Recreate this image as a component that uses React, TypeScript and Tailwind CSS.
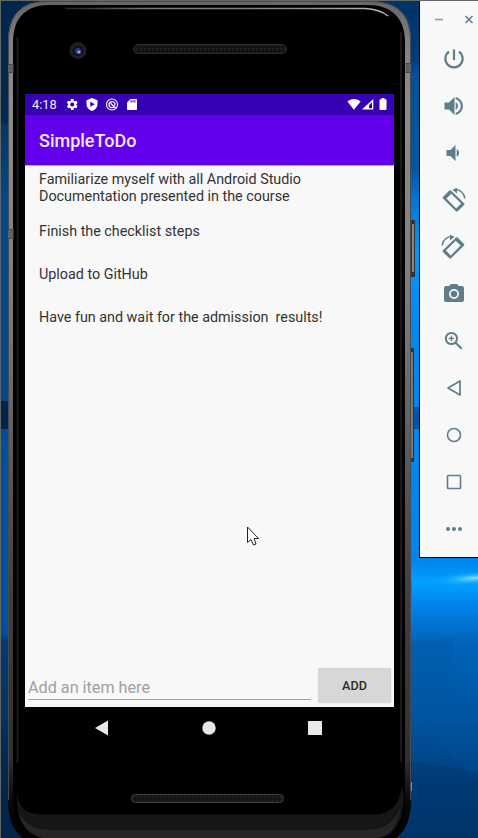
import React from "react";

const items = [
  "Familiarize myself with all Android Studio Documentation presented in the course",
  "Finish the checklist steps",
  "Upload to GitHub",
  "Have fun and wait for the admission  results!",
];

function Wallpaper() {
  return (
    <svg className="absolute inset-0" width="478" height="838" viewBox="0 0 478 838">
      <defs>
        <linearGradient id="wallRight" x1="0" y1="0" x2="0" y2="1">
          <stop offset="0" stopColor="#003366" />
          <stop offset="0.07" stopColor="#003c78" />
          <stop offset="0.09" stopColor="#00509b" />
          <stop offset="0.2" stopColor="#0055a4" />
          <stop offset="0.24" stopColor="#0078d8" />
          <stop offset="0.3" stopColor="#0098fa" />
          <stop offset="0.4" stopColor="#0088f0" />
          <stop offset="0.67" stopColor="#0084ee" />
          <stop offset="0.695" stopColor="#00a2ff" />
          <stop offset="0.72" stopColor="#0084ec" />
          <stop offset="0.77" stopColor="#0063b8" />
          <stop offset="0.86" stopColor="#0053a0" />
          <stop offset="0.93" stopColor="#004080" />
          <stop offset="1" stopColor="#003468" />
        </linearGradient>
        <linearGradient id="wallLeft" x1="0" y1="0" x2="0" y2="1">
          <stop offset="0" stopColor="#00264d" />
          <stop offset="0.145" stopColor="#002a54" />
          <stop offset="0.15" stopColor="#003868" />
          <stop offset="0.24" stopColor="#004a8c" />
          <stop offset="0.46" stopColor="#00498a" />
          <stop offset="0.55" stopColor="#0052a0" />
          <stop offset="0.755" stopColor="#0052a0" />
          <stop offset="0.765" stopColor="#003a74" />
          <stop offset="0.85" stopColor="#003468" />
          <stop offset="0.9" stopColor="#002a54" />
          <stop offset="1" stopColor="#002448" />
        </linearGradient>
        <radialGradient id="glow">
          <stop offset="0" stopColor="#8ee2ff" />
          <stop offset="0.45" stopColor="#32bdff" stopOpacity="0.7" />
          <stop offset="1" stopColor="#00a0ff" stopOpacity="0" />
        </radialGradient>
      </defs>
      <rect width="240" height="838" fill="url(#wallLeft)" />
      <rect x="240" width="238" height="838" fill="url(#wallRight)" />
      <rect x="0" y="401" width="12" height="28" fill="#00244a" />
      <rect x="408" y="407" width="12" height="22" fill="#0055a8" />
      <ellipse cx="476" cy="578" rx="46" ry="7" fill="url(#glow)" transform="rotate(-4 476 578)" />
      <path d="M410 641L454 638V652L446 680L462 710L478 730V780L440 745L410 690Z" fill="#00559f" opacity="0.25" />
      <path d="M410 762L440 765L478 772V838H410Z" fill="#003568" opacity="0.4" />
      <path d="M0 0H1V838H0Z" fill="#656565" />
    </svg>
  );
}

function Shell() {
  return (
    <svg className="absolute inset-0" width="478" height="838" viewBox="0 0 478 838">
      <defs>
        <linearGradient id="metal" x1="0" y1="0" x2="0" y2="1">
          <stop offset="0" stopColor="#666" />
          <stop offset="0.05" stopColor="#808080" />
          <stop offset="0.12" stopColor="#8c8c8c" />
          <stop offset="0.35" stopColor="#7d7d7d" />
          <stop offset="0.5" stopColor="#626262" />
          <stop offset="0.7" stopColor="#404040" />
          <stop offset="0.9" stopColor="#303030" />
          <stop offset="0.95" stopColor="#080808" />
          <stop offset="1" stopColor="#000" />
        </linearGradient>
        <linearGradient id="shine" x1="0" x2="1">
          <stop offset="0" stopColor="#222" />
          <stop offset="0.25" stopColor="#777" />
          <stop offset="0.7" stopColor="#888" />
          <stop offset="1" stopColor="#bbb" />
        </linearGradient>
        <pattern id="grill" width="4" height="4" patternUnits="userSpaceOnUse">
          <rect width="4" height="4" fill="#171717" />
          <circle cx="1" cy="1" r="0.7" fill="#2c2c2c" />
          <circle cx="3" cy="3" r="0.7" fill="#060606" />
        </pattern>
      </defs>
      <rect x="410" y="220" width="5" height="57" rx="1" fill="#333" />
      <rect x="412" y="224" width="2" height="48" fill="#888" />
      <rect x="410" y="348" width="4" height="114" rx="1" fill="#333" />
      <rect x="411" y="352" width="2" height="106" fill="#777" />
      <rect x="410" y="580" width="2" height="41" fill="#666" />
      <rect x="410" y="782" width="2" height="9" fill="#888" />
      <path d="M8 42C8 15 21 1 48 1H368C398 1 411 14 411 42V800C411 820 405 838 385 843H34C14 838 8 820 8 800Z" fill="url(#metal)" />
      <path d="M8.500 800V42C8.500 15 21 1.500 48 1.500H368C398 1.500 410.500 14 410.500 42V800" fill="none" stroke="#4a4a4a" strokeWidth="1" />
      <path d="M13 43C13 18 25 5 50 5H367C392 5 405 18 405 43V800C405 821 399 838 376 843H42C20 838 13 821 13 800Z" fill="#000" />
      <path d="M17 790C18 810 27 814.500 45 814.500H372C391 814.500 399 805 402 786L404 795C404 818 395 838 378 838H40C22 832 16 815 17 790Z" fill="#161616" />
      <path d="M18 812C28 829 40 830 60 830H360C382 830 390 827 401 808C395 832 387 838 374 838H44C32 836 22 828 18 812Z" fill="#262626" />
      <path d="M17.500 37V763M401 32V762" stroke="#1a1a1a" strokeWidth="2" />
      <path d="M8 64H13.500V73H8ZM405.500 63H411V73H405.500ZM8 229H13.500V239H8Z" fill="#606060" />
      <path d="M8 64.500H13.500M8 72.500H13.500M405.500 63.500H411M405.500 72.500H411M8 229.500H13.500M8 238.500H13.500" stroke="#484848" strokeWidth="1" />
      <path d="M65 8.500H365C376 9 382 11 388 16" fill="none" stroke="url(#shine)" strokeWidth="1.500" />
      <path d="M0 .5H478" stroke="#666" />
      <circle cx="78" cy="50.500" r="8.500" fill="#202020" />
      <circle cx="78" cy="50.500" r="5.500" fill="#10122a" />
      <circle cx="78" cy="51" r="3" fill="#29388c" />
      <circle cx="79" cy="52" r="1.600" fill="#8aaaf0" />
      <rect x="133.500" y="44.500" width="153" height="9" rx="4.500" fill="url(#grill)" stroke="#2c2c2c" />
      <rect x="131.500" y="794.500" width="152" height="8" rx="4" fill="url(#grill)" stroke="#404040" />
    </svg>
  );
}

function StatusBar() {
  return (
    <div className="flex h-[21px] items-center bg-[#3700b3] pl-[7px] text-[12.8px] text-[#f2ecff]">
      <span className="w-[34px] pt-px">4:18</span>
      <svg width="76" height="21" viewBox="0 0 76 21" fill="#fff">
        <g transform="translate(-.6 3.6) scale(.57)">
          <path d="M19.14 12.94c.04-.3.06-.61.06-.94 0-.32-.02-.64-.07-.94l2.03-1.58a.5.5 0 0 0 .12-.61l-1.92-3.32a.5.5 0 0 0-.59-.22l-2.39.96a7 7 0 0 0-1.62-.94l-.36-2.54a.5.5 0 0 0-.48-.41h-3.84a.5.5 0 0 0-.47.41l-.36 2.54c-.59.24-1.13.57-1.62.94l-2.39-.96a.5.5 0 0 0-.59.22L2.74 8.87a.5.5 0 0 0 .12.61l2.03 1.58a7 7 0 0 0 0 1.88l-2.03 1.58a.5.5 0 0 0-.12.61l1.92 3.32c.12.22.37.29.59.22l2.39-.96c.5.38 1.03.7 1.62.94l.36 2.54c.05.24.24.41.48.41h3.84c.24 0 .44-.17.47-.41l.36-2.54a7 7 0 0 0 1.62-.94l2.39.96c.22.08.47 0 .59-.22l1.92-3.32a.5.5 0 0 0-.12-.61zM12 15.600a3.600 3.600 0 1 1 0-7.200 3.600 3.600 0 0 1 0 7.200z" />
        </g>
        <path fillRule="evenodd" d="M26 4L31.500 6.200V10C31.500 13.500 29 16 26 17C23 16 20.500 13.500 20.500 10V6.200ZM24.300 7.800V12.800L28.700 10.300Z" />
        <circle cx="46" cy="10.500" r="5.500" fill="none" stroke="#fff" strokeWidth="1.100" />
        <path d="M48 12.800A3 3 0 1 1 48.800 9.500V11.500M44.600 9.200L50 14.500" fill="none" stroke="#fff" strokeWidth="1.300" />
        <path fillRule="evenodd" d="M64.500 5H70C70.600 5 71 5.400 71 6V15C71 15.600 70.600 16 70 16H62C61.400 16 61 15.600 61 15V8.500ZM64.600 6.300V8.500H65.600V6.300ZM66.500 6.300V8.500H67.500V6.300ZM68.400 6.300V8.500H69.400V6.300Z" />
      </svg>
      <svg width="42" height="21" viewBox="0 0 42 21" fill="#fff" className="mr-[5px] ml-auto">
        <path d="M.4 7.500C4 4 10 4 13.600 7.500L7 15.700Z" />
        <path fillRule="evenodd" d="M26.300 5V15.600H15ZM25 8.200L22 11.200V14.300H25Z" />
        <path d="M34.500 4H37.500V5.200H38.800Q39.500 5.200 39.500 6V15Q39.500 16 38.500 16H33.500Q32.500 16 32.500 15V6Q32.500 5.200 33.200 5.200H34.500Z" />
      </svg>
    </div>
  );
}

function TodoScreen() {
  return (
    <main className="flex h-[613px] flex-col bg-[#f8f8f8]">
      <StatusBar />
      <header className="flex h-[50px] items-center bg-[#6200ee] pt-px pl-[14px] text-[18px] font-medium text-[#f3eaff]">
        SimpleToDo
      </header>
      <ul className="flex-1 border-t border-[#b9a5ec] pt-[1.4px] text-[14.34px] leading-[16.8px] text-[#333]">
        {items.map((item) => (
          <li key={item} className="flex h-[43.1px] items-center pr-[60px] pl-[14px] whitespace-pre-wrap">
            {item}
          </li>
        ))}
      </ul>
      <form className="flex h-[44px] items-start">
        <input
          placeholder="Add an item here"
          className="mt-[8px] ml-[3px] h-[29px] w-[283px] border-b border-[#a0a0a0] pt-[4px] text-[16.2px] text-[#333] outline-none placeholder:text-[#a0a0a0]"
        />
        <button
          type="button"
          className="mt-[5px] ml-[7px] h-[35px] w-[73px] rounded-[2px] bg-[#d6d7d7] pt-px text-[12.6px] font-medium text-[#2b2b2b] shadow-[0_0_1px_#bbb]"
        >
          ADD
        </button>
      </form>
    </main>
  );
}

function NavigationBar() {
  return (
    <nav className="flex h-[42px] items-center justify-between pr-[72px] pl-[70px]">
      <svg width="14" height="16" viewBox="0 0 14 16">
        <path d="M0 8L13 .5V15.500Z" fill="#e8e8e8" />
      </svg>
      <svg width="14" height="14" viewBox="0 0 14 14">
        <circle cx="7" cy="7" r="6.700" fill="#e8e8e8" />
      </svg>
      <svg width="14" height="14" viewBox="0 0 14 14">
        <rect width="14" height="14" fill="#e8e8e8" />
      </svg>
    </nav>
  );
}

function RotatedDevice() {
  return (
    <>
      <path
        fillRule="evenodd"
        d="M9 2.500Q8.200 1.800 7.400 2.500L1 8.900Q.3 9.700 1 10.500L14 23.300Q14.900 24.100 15.700 23.300L22.100 16.900Q22.900 16.100 22.100 15.300ZM9.300 5.700L19.100 15.500L14.200 20.400L4.400 10.600Z"
      />
      <path fill="none" stroke="currentColor" strokeWidth="1.500" d="M13 1.600C18.500 1.600 22.500 5.500 22.800 10.500" />
      <path d="M10.500 1.700L15 -.3V5.600Z" />
    </>
  );
}

const controls: { name: string; glyph: React.ReactNode }[] = [
  { name: "Power", glyph: <path fill="none" stroke="currentColor" strokeWidth="2.200" d="M12 2.500V13M7 4.700A8.600 8.600 0 1 0 17 4.700" /> },
  { name: "Volume up", glyph: <path d="M2.500 8.500V15.500H7L12.500 21V3L7 8.500ZM13.700 8V16A4.600 4.600 0 0 0 13.700 8ZM13.700 3V5.200A7.100 7.100 0 0 1 13.700 18.800V21A9.200 9.200 0 0 0 13.700 3Z" /> },
  { name: "Volume down", glyph: <path d="M4.500 9V15H8.500L13.500 20V4L8.500 9ZM14.700 8V16A4.500 4.500 0 0 0 14.700 8Z" /> },
  { name: "Rotate left", glyph: <RotatedDevice /> },
  {
    name: "Rotate right",
    glyph: (
      <g transform="matrix(-1 0 0 1 23 0)">
        <RotatedDevice />
      </g>
    ),
  },
  { name: "Screenshot", glyph: <path transform="translate(0 -1)" fillRule="evenodd" d="M9 3L7.200 5H4a2 2 0 0 0-2 2V19a2 2 0 0 0 2 2H20a2 2 0 0 0 2-2V7a2 2 0 0 0-2-2H16.800L15 3ZM12 18a5 5 0 1 0 0-10 5 5 0 0 0 0 10ZM12 16.200a3.200 3.200 0 1 1 0-6.400 3.200 3.200 0 0 1 0 6.400Z" /> },
  {
    name: "Zoom",
    glyph: (
      <>
        <path fill="none" stroke="currentColor" strokeWidth="2" d="M15 9.500A5.600 5.600 0 1 1 3.800 9.500A5.600 5.600 0 0 1 15 9.500ZM13.500 13.500L19.700 19.700" />
        <path fill="none" stroke="currentColor" strokeWidth="1.300" d="M9.400 6.800V12.200M6.700 9.500H12.100" />
      </>
    ),
  },
  { name: "Back", glyph: <path fill="none" stroke="currentColor" strokeWidth="1.700" strokeLinejoin="round" d="M6 12L18 5V19Z" /> },
  { name: "Home", glyph: <circle cx="12" cy="12" r="6.500" fill="none" stroke="currentColor" strokeWidth="1.600" /> },
  { name: "Overview", glyph: <rect x="5.500" y="5.500" width="13" height="13" rx=".8" fill="none" stroke="currentColor" strokeWidth="1.600" /> },
  { name: "More", glyph: <path d="M4 12a2 2 0 1 0 4 0a2 2 0 1 0-4 0M10 12a2 2 0 1 0 4 0a2 2 0 1 0-4 0M16 12a2 2 0 1 0 4 0a2 2 0 1 0-4 0" /> },
];

function EmulatorToolbar() {
  return (
    <aside className="mt-px ml-[8px] h-[557px] w-[59px] border-b border-l border-black bg-[#f8f8f8] text-[#5f7d8b]">
      <div className="flex h-[34px] items-center pt-[4px]">
        <svg width="58" height="20" viewBox="0 0 58 20" fill="none" stroke="currentColor">
          <path d="M15 9.500H23" strokeWidth="1.500" opacity=".75" />
          <path d="M45.500 6L52.500 13M52.500 6L45.500 13" strokeWidth="1.500" />
        </svg>
      </div>
      <div className="flex flex-col items-center pl-[10px]">
        {controls.map((control) => (
          <button key={control.name} aria-label={control.name} className="flex h-[47px] items-center">
            <svg width="24" height="24" viewBox="0 0 24 24" fill="currentColor" className="overflow-visible">
              {control.glyph}
            </svg>
          </button>
        ))}
      </div>
    </aside>
  );
}

export default function App() {
  return (
    <div className="relative h-[838px] w-[478px] overflow-hidden font-[Roboto,sans-serif]">
      <Wallpaper />
      <Shell />
      <div className="relative flex items-start">
        <div className="h-[838px] w-[411px] shrink-0 pt-[94px] pr-[17px] pl-[25px]">
          <TodoScreen />
          <NavigationBar />
        </div>
        <EmulatorToolbar />
      </div>
      <svg className="absolute top-[526px] left-[246px]" width="14" height="22" viewBox="0 0 14 22">
        <path d="M1.500 1V16.500L5 13.500L7.500 19L10 18L8 12.500H12.500Z" fill="#fff" stroke="#222" strokeWidth="1" />
      </svg>
    </div>
  );
}
